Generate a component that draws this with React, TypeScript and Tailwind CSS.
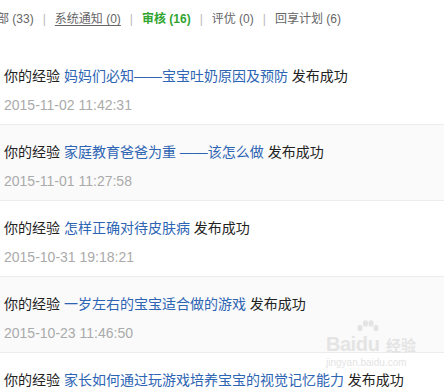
import React from 'react';

const items = [
  { title: '妈妈们必知——宝宝吐奶原因及预防', time: '2015-11-02 11:42:31' },
  { title: '家庭教育爸爸为重 ——该怎么做', time: '2015-11-01 11:27:58' },
  { title: '怎样正确对待皮肤病', time: '2015-10-31 19:18:21' },
  { title: '一岁左右的宝宝适合做的游戏', time: '2015-10-23 11:46:50' },
  { title: '家长如何通过玩游戏培养宝宝的视觉记忆能力', time: '2015-10-22 10:31:12' },
];

const Sep = () => <span className="mx-[9px] text-[#bbb]">|</span>;

export default function App() {
  return (
    <div
      className="relative w-[444px] h-[390px] overflow-hidden bg-white"
      style={{ fontFamily: '"Liberation Sans", "Noto Sans CJK SC", sans-serif' }}
    >
      {/* tabs */}
      <div className="h-[49px] pt-[10px] whitespace-nowrap text-[12px] leading-[18px] text-[#666]">
        <span className="ml-[-15px]">全部 (33)</span>
        <Sep />
        <span className="underline underline-offset-2">系统通知 (0)</span>
        <Sep />
        <span className="font-bold text-[#33a532]">审核 (16)</span>
        <Sep />
        <span>评优 (0)</span>
        <Sep />
        <span>回享计划 (6)</span>
      </div>

      {/* list */}
      <div>
        {items.map((it, i) => (
          <div
            key={i}
            className={`pt-[16px] pb-[8px] pl-[4px] border-b border-[#ececec] whitespace-nowrap ${
              i % 2 === 1 ? 'bg-[#fafafa]' : 'bg-white'
            }`}
          >
            <div className="text-[14px] leading-[22px] text-[#222]">
              你的经验 <span className="text-[#2d64b3]">{it.title}</span> 发布成功
            </div>
            <div className="mt-[7px] text-[14px] leading-[22px] text-[#aaa]">{it.time}</div>
          </div>
        ))}
      </div>

      {/* watermark */}
      <div className="absolute left-[326px] top-[334px] text-[#e4e4e4] pointer-events-none">
        <div className="flex items-end leading-none">
          <span className="text-[20px] font-bold tracking-tight">Bai</span>
          <span className="relative text-[20px] font-bold">
            <svg width="24" height="17" viewBox="0 0 24 17" className="absolute left-[0px] top-[-14px]">
              <ellipse cx="4" cy="8" rx="2.6" ry="3.2" fill="#e4e4e4" />
              <ellipse cx="9.5" cy="3.5" rx="2.6" ry="3.2" fill="#e4e4e4" />
              <ellipse cx="15" cy="3.5" rx="2.6" ry="3.2" fill="#e4e4e4" />
              <ellipse cx="20" cy="8" rx="2.6" ry="3.2" fill="#e4e4e4" />
            </svg>
            du
          </span>
          <span className="ml-[6px] mb-[1px] text-[15px] font-bold">经验</span>
        </div>
        <div className="mt-[4px] text-[10px] leading-none">jingyan.baidu.com</div>
      </div>
    </div>
  );
}
